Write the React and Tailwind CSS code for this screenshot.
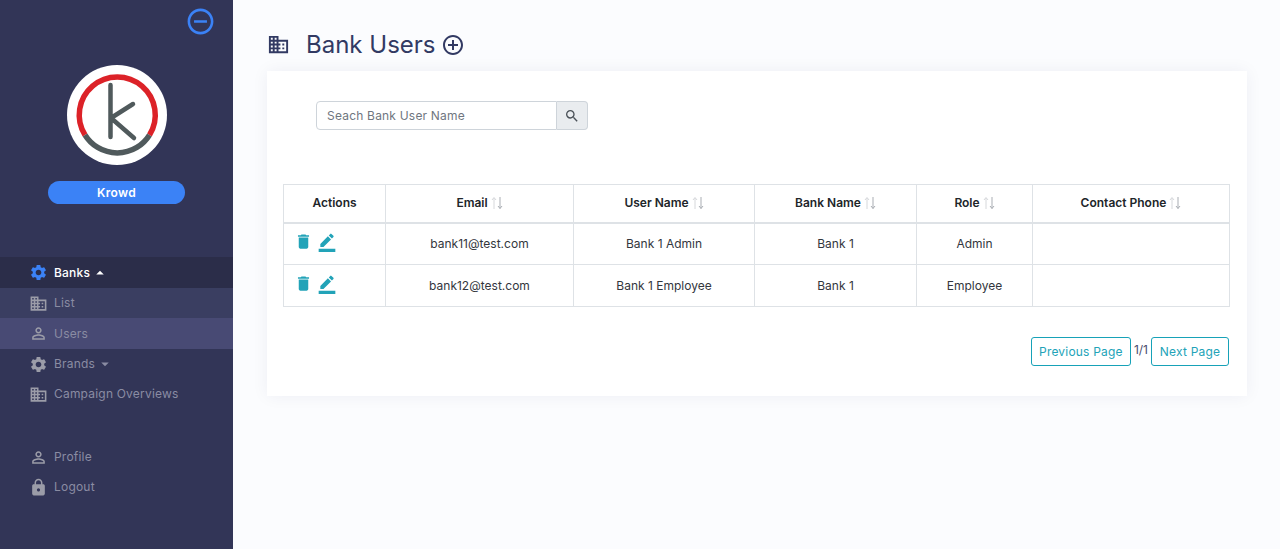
import React from "react";
import { MdDomain, MdSettings, MdPersonOutline, MdLock, MdDelete, MdBorderColor, MdAddCircleOutline, MdRemoveCircleOutline, MdArrowDropUp, MdArrowDropDown, MdSearch } from "react-icons/md";

const font = { fontFamily: "Inter, 'Liberation Sans', sans-serif" };

function NavItem({ icon: Icon, label, caret, className = "", text = "text-[#8a8ca3]", iconCls = "text-[#9b9ca8]", h = "h-[30px]" }) {
  return (
    <div className={`flex items-center ${h} pl-[29px] ${className}`}>
      <Icon className={`w-[19px] h-[19px] shrink-0 ${iconCls}`} />
      <span className={`ml-[6px] text-xs tracking-[0.2px] ${text}`}>{label}</span>
      {caret === "up" && <MdArrowDropUp className={`w-[18px] h-[18px] ml-[1px] ${text}`} />}
      {caret === "down" && <MdArrowDropDown className={`w-[18px] h-[18px] ml-[1px] ${text}`} />}
    </div>
  );
}

function Logo() {
  return (
    <div className="w-[100px] h-[100px] rounded-full bg-white flex items-center justify-center">
      <svg width="100" height="100" viewBox="0 0 100 100" fill="none" strokeLinecap="round">
        <path d="M20.5 70 A38 38 0 1 1 85 70" stroke="#dc2228" strokeWidth="5.5" strokeLinecap="butt" transform="translate(-2.5 0)" />
        <path d="M18 70 A38 38 0 0 0 82.5 70" stroke="#505a5c" strokeWidth="5.5" strokeLinecap="butt" />
        <path d="M43.5 20 V72 M44 53 L66 39 M44 53 L67 73" stroke="#505a5c" strokeWidth="4.5" />
      </svg>
    </div>
  );
}

function Sort() {
  return (
    <svg width="12" height="14" viewBox="0 0 12 14" fill="none" className="inline-block ml-[3px] align-[-3px]" strokeWidth="1">
      <path d="M3 13 V2 M1 4 L3 1.5 L5 4" stroke="#d6d8db" />
      <path d="M9 1 V12.5 M7 10 L9 12.5 L11 10" stroke="#a9adb3" />
    </svg>
  );
}

const cols = [
  { l: "Email", w: "w-[188px]" },
  { l: "User Name", w: "w-[181px]" },
  { l: "Bank Name", w: "w-[162px]" },
  { l: "Role", w: "w-[116px]" },
  { l: "Contact Phone", w: "w-[197px]" },
];

const rows = [
  ["bank11@test.com", "Bank 1 Admin", "Bank 1", "Admin", ""],
  ["bank12@test.com", "Bank 1 Employee", "Bank 1", "Employee", ""],
];

export default function App() {
  return (
    <div className="flex h-[549px] w-[1280px] overflow-hidden bg-[#fbfcfe]" style={font}>
      <aside className="w-[233px] shrink-0 bg-[#323557] flex flex-col">
        <div className="flex justify-end pt-[6px] pr-[17px] h-[37px]">
          <MdRemoveCircleOutline className="w-[31px] h-[31px] text-[#3b82f6]" />
        </div>
        <div className="flex justify-center mt-[28px]"><Logo /></div>
        <div className="mx-[48px] mt-[16px] h-[23px] rounded-full bg-[#3b82f6] text-white text-xs font-semibold flex items-center justify-center tracking-[0.3px]">Krowd</div>
        <div className="mt-[53px]">
          <NavItem icon={MdSettings} label="Banks" caret="up" h="h-[31px]" className="bg-[#2b2d49]" text="text-white font-medium" iconCls="text-[#3b82f6]" />
          <NavItem icon={MdDomain} label="List" className="bg-[#3a3e61]" />
          <NavItem icon={MdPersonOutline} label="Users" h="h-[31px]" className="bg-[#484a74]" />
          <NavItem icon={MdSettings} label="Brands" caret="down" />
          <NavItem icon={MdDomain} label="Campaign Overviews" />
        </div>
        <div className="mt-[33px]">
          <NavItem icon={MdPersonOutline} label="Profile" />
          <NavItem icon={MdLock} label="Logout" />
        </div>
      </aside>
      <main className="flex-1 min-w-0 pl-[34px] pr-[33px]">
        <div className="flex items-center h-[71px] pt-[18px] text-[#323a63]">
          <MdDomain className="w-[23px] h-[23px] text-[#323a63]" />
          <h1 className="ml-[16px] text-2xl font-normal">Bank Users</h1>
          <MdAddCircleOutline className="w-[24px] h-[24px] ml-[5px]" />
        </div>
        <section className="bg-white h-[325px] shadow-[0_0_16px_rgba(30,40,90,0.06)] pl-[16px] pr-[18px]">
          <div className="pt-[30px] pl-[33px]">
            <div className="flex w-[272px] h-[29px] text-xs">
              <div className="flex-1 border border-[#ced4da] rounded-l-[4px] bg-white flex items-center pl-[10px] text-[#6f7680] tracking-[0.2px]">Seach Bank User Name</div>
              <div className="w-[31px] border border-l-0 border-[#ced4da] rounded-r-[4px] bg-[#e9ecef] flex items-center justify-center">
                <MdSearch className="w-[16px] h-[16px] text-[#495057]" />
              </div>
            </div>
          </div>
          <table className="mt-[54px] w-[946px] table-fixed border-collapse text-xs text-[#33363d]">
            <thead>
              <tr className="h-[38px]">
                <th className="w-[102px] border border-[#dee2e6] border-b-2 font-semibold text-[#212529]">Actions</th>
                {cols.map((c) => (
                  <th key={c.l} className={`${c.w} border border-[#dee2e6] border-b-2 font-semibold text-[#212529]`}>{c.l}<Sort /></th>
                ))}
              </tr>
            </thead>
            <tbody>
              {rows.map((r) => (
                <tr key={r[0]} className="h-[42px]">
                  <td className="border border-[#dee2e6] pl-[10px]">
                    <div className="flex items-center text-[#22a3b8] -mt-[4px]">
                  <MdDelete className="w-[19px] h-[19px]" />
                      <MdBorderColor className="w-[20px] h-[20px] ml-[4px]" />
                    </div>
                  </td>
                  {r.map((v, i) => (
                    <td key={i} className="border border-[#dee2e6] text-center">{v}</td>
                  ))}
                </tr>
              ))}
            </tbody>
          </table>
          <div className="flex justify-end items-start mt-[30px] text-xs text-[#22a3b8] pr-[-1px]">
            <button className="h-[29px] w-[100px] border border-[#17a2b8] rounded-[3px] tracking-[0.2px]">Previous Page</button>
            <span className="mx-[3px] text-[#4a4d6b] leading-[25px]">1/1</span>
            <button className="h-[29px] w-[78px] border border-[#17a2b8] rounded-[3px] tracking-[0.2px]">Next Page</button>
          </div>
        </section>
      </main>
    </div>
  );
}
